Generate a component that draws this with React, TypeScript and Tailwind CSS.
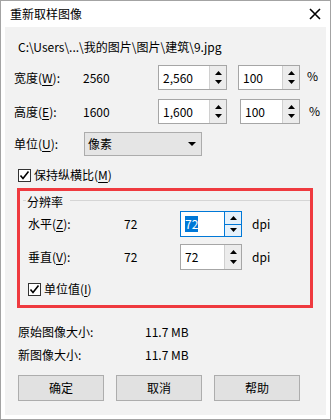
import React from "react";

const font = { fontFamily: '"Noto Sans CJK SC", "Noto Sans", sans-serif' };

function Up() {
  return (
    <svg width="7" height="4" viewBox="0 0 7 4">
      <path d="M0 4 L3.5 0 L7 4 Z" fill="#000" />
    </svg>
  );
}
function Down() {
  return (
    <svg width="7" height="4" viewBox="0 0 7 4">
      <path d="M0 0 L3.5 4 L7 0 Z" fill="#000" />
    </svg>
  );
}

function Spin({
  value,
  w,
  focused = false,
  selected = false,
}: {
  value: string;
  w: string;
  focused?: boolean;
  selected?: boolean;
}) {
  return (
    <div
      className={`flex h-full ${w} border bg-white ${
        focused ? "border-[#0078d7]" : "border-[#a6a6a6]"
      }`}
    >
      <div className="flex flex-1 items-center pl-[4px] text-[12px] leading-[16px] text-black">
        {selected ? (
          <span className="bg-[#0078d7] text-white">{value}</span>
        ) : (
          <span>{value}</span>
        )}
      </div>
      {focused ? (
        <div className="flex w-[17px] flex-col border-l border-[#0078d7]">
          <div className="flex flex-1 items-center justify-center border-b border-[#0078d7] bg-[#e5f1fb]">
            <Up />
          </div>
          <div className="flex flex-1 items-center justify-center bg-[#e5f1fb]">
            <Down />
          </div>
        </div>
      ) : (
        <div className="flex w-[17px] flex-col items-center justify-between border-l border-[#d0d0d0] bg-[#ececec] py-[5px]">
          <Up />
          <Down />
        </div>
      )}
    </div>
  );
}

function Check({ label, u }: { label: string; u: string }) {
  return (
    <div className="flex h-[16px] items-center">
      <div className="flex h-[13px] w-[13px] items-center justify-center border border-[#333] bg-white">
        <svg width="11" height="11" viewBox="0 0 11 11">
          <path d="M1.5 5.5 L4 8.5 L9.5 1.5" stroke="#000" strokeWidth="1.6" fill="none" />
        </svg>
      </div>
      <span className="ml-[3px] text-[12px] leading-[16px] text-black">
        {label}(<span className="underline underline-offset-2">{u}</span>)
      </span>
    </div>
  );
}

export default function App() {
  return (
    <div
      className="flex h-[420px] w-[331px] flex-col border border-[#a3a3a3] bg-white text-black"
      style={font}
    >
      {/* title bar */}
      <div className="flex h-[26px] shrink-0 items-center justify-between pl-[9px] pr-[8px]">
        <span className="text-[12px] leading-[16px] text-black">重新取样图像</span>
        <svg width="12" height="12" viewBox="0 0 12 12" className="mr-[1px]">
          <path d="M1 1 L11 11 M11 1 L1 11" stroke="#000" strokeWidth="1.6" />
        </svg>
      </div>

      {/* body */}
      <div className="mx-[4px] flex h-[388px] flex-col bg-[#f2f2f2] text-[12px] leading-[16px]">
        <div className="ml-[13px] mt-[12px] h-[16px]">C:\Users\...\我的图片\图片\建筑\9.jpg</div>

        {/* width row */}
        <div className="mt-[10px] flex h-[25px] items-center">
          <span className="ml-[9px] w-[69px]">
            宽度(<span className="underline underline-offset-2">W</span>):
          </span>
          <span className="w-[75px]">2560</span>
          <Spin value="2,560" w="w-[69px]" />
          <div className="ml-[11px] h-full">
            <Spin value="100" w="w-[62px]" />
          </div>
          <span className="mb-[4px] ml-[7px]">%</span>
        </div>

        {/* height row */}
        <div className="mt-[9px] flex h-[25px] items-center">
          <span className="ml-[9px] w-[69px]">
            高度(<span className="underline underline-offset-2">E</span>):
          </span>
          <span className="w-[75px]">1600</span>
          <Spin value="1,600" w="w-[69px]" />
          <div className="ml-[13px] h-full">
            <Spin value="100" w="w-[60px]" />
          </div>
          <span className="mb-[1px] ml-[9px]">%</span>
        </div>

        {/* unit row */}
        <div className="mt-[8px] flex h-[24px] items-center">
          <span className="ml-[9px] w-[70px]">
            单位(<span className="underline underline-offset-2">U</span>):
          </span>
          <div className="flex h-full w-[118px] items-center justify-between border border-[#acacac] bg-[#e5e5e5] pl-[3px] pr-[5px]">
            <span>像素</span>
            <svg width="8" height="4" viewBox="0 0 8 4">
              <path d="M0 0 L4 4 L8 0 Z" fill="#000" />
            </svg>
          </div>
        </div>

        <div className="ml-[13px] mt-[11px]">
          <Check label="保持纵横比" u="M" />
        </div>

        {/* resolution group with red highlight */}
        <div className="ml-[12px] mt-[5px] flex h-[120px] w-[296px] flex-col border-[3px] border-[#ef3a3f]">
          <div className="mt-[3px] flex h-[16px] items-start">
            <div className="ml-[3px] mt-[6px] h-px w-[3px] bg-[#d5d5d5]" />
            <span className="ml-[1px] pr-[7px]">分辨率</span>
            <div className="mt-[6px] h-px flex-1 bg-[#d5d5d5]" />
          </div>

          <div className="mt-[1px] flex h-[26px] items-center">
            <span className="ml-[8px] w-[96px]">
              水平(<span className="underline underline-offset-2">Z</span>):
            </span>
            <span className="w-[56px]">72</span>
            <Spin value="72" w="w-[62px]" focused selected />
            <span className="ml-[10px]">dpi</span>
          </div>

          <div className="mt-[7px] flex h-[26px] items-center">
            <span className="ml-[8px] w-[96px]">
              垂直(<span className="underline underline-offset-2">V</span>):
            </span>
            <span className="w-[56px]">72</span>
            <Spin value="72" w="w-[62px]" />
            <span className="ml-[10px]">dpi</span>
          </div>

          <div className="ml-[8px] mt-[11px]">
            <Check label="单位值" u="I" />
          </div>
        </div>

        <div className="ml-[13px] mt-[16px] flex h-[16px]">
          <span className="w-[127px]">原始图像大小:</span>
          <span>11.7 MB</span>
        </div>
        <div className="ml-[13px] mt-[7px] flex h-[16px]">
          <span className="w-[127px]">新图像大小:</span>
          <span>11.7 MB</span>
        </div>

        <div className="ml-[13px] mt-[12px] flex h-[26px] gap-[12px]">
          {["确定", "取消", "帮助"].map((t) => (
            <div
              key={t}
              className="flex h-full w-[86px] items-center justify-center border border-[#adadad] bg-[#e1e1e1]"
            >
              {t}
            </div>
          ))}
        </div>
      </div>
    </div>
  );
}
